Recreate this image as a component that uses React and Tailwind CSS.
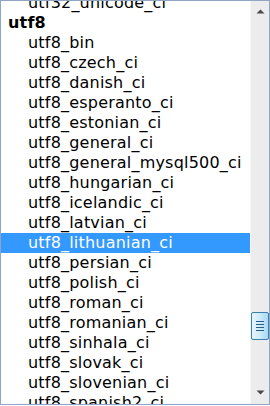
const items = [
  "utf8_bin",
  "utf8_czech_ci",
  "utf8_danish_ci",
  "utf8_esperanto_ci",
  "utf8_estonian_ci",
  "utf8_general_ci",
  "utf8_general_mysql500_ci",
  "utf8_hungarian_ci",
  "utf8_icelandic_ci",
  "utf8_latvian_ci",
  "utf8_lithuanian_ci",
  "utf8_persian_ci",
  "utf8_polish_ci",
  "utf8_roman_ci",
  "utf8_romanian_ci",
  "utf8_sinhala_ci",
  "utf8_slovak_ci",
  "utf8_slovenian_ci",
  "utf8_spanish2_ci",
];

const selected = "utf8_lithuanian_ci";

function Arrow({ down }) {
  return (
    <svg width="9" height="5" viewBox="0 0 9 5">
      {down ? (
        <polygon points="0.5,0.5 8.5,0.5 4.5,4.5" fill="#4a4a4a" />
      ) : (
        <polygon points="0.5,4.5 8.5,4.5 4.5,0.5" fill="#4a4a4a" />
      )}
    </svg>
  );
}

function Scrollbar() {
  return (
    <div className="flex w-[19px] shrink-0 flex-col border-l border-[#f7f7f7] bg-[#ececec]">
      {/* Up button */}
      <div className="flex h-[19px] items-center justify-center pt-[2px]">
        <Arrow />
      </div>

      {/* Track + thumb */}
      <div className="flex-1 pt-[292px]">
        <div className="flex h-[28px] w-[18px] flex-col items-center justify-center gap-[2px] rounded-[2px] border border-[#3c7fb1] bg-gradient-to-r from-[#e5f5fd] via-[#cdebfb] to-[#a7d9f5]">
          <div className="h-px w-[8px] bg-[#2d5c88]" />
          <div className="h-px w-[8px] bg-[#2d5c88]" />
          <div className="h-px w-[8px] bg-[#2d5c88]" />
          <div className="h-px w-[8px] bg-[#2d5c88]" />
        </div>
      </div>

      {/* Down button */}
      <div className="flex h-[19px] items-center justify-center pb-[4px]">
        <Arrow down />
      </div>
    </div>
  );
}

export default function App() {
  return (
    <div className="h-[406px] w-[270px] overflow-hidden bg-white">
      <div
        className="flex h-[405px] w-[270px] border border-[#8fa5c2] bg-white text-[16px] tracking-[0.2px] text-black"
        style={{ fontFamily: '"DejaVu Sans", Verdana, sans-serif' }}
      >
        {/* Options */}
        <div className="min-w-0 flex-1 overflow-hidden">
          <div className="-mt-2">
            <div className="flex h-[20px] items-center whitespace-nowrap pl-[27px]">
              utf32_unicode_ci
            </div>
            <div className="flex h-[20px] items-center whitespace-nowrap pl-[7px] font-bold">
              utf8
            </div>
            {items.map((name) => (
              <div
                key={name}
                className={
                  name === selected
                    ? "flex h-[20px] items-center whitespace-nowrap bg-[#3399ff] pl-[27px] text-white"
                    : "flex h-[20px] items-center whitespace-nowrap pl-[27px]"
                }
              >
                {name}
              </div>
            ))}
          </div>
        </div>

        <Scrollbar />
      </div>
    </div>
  );
}
